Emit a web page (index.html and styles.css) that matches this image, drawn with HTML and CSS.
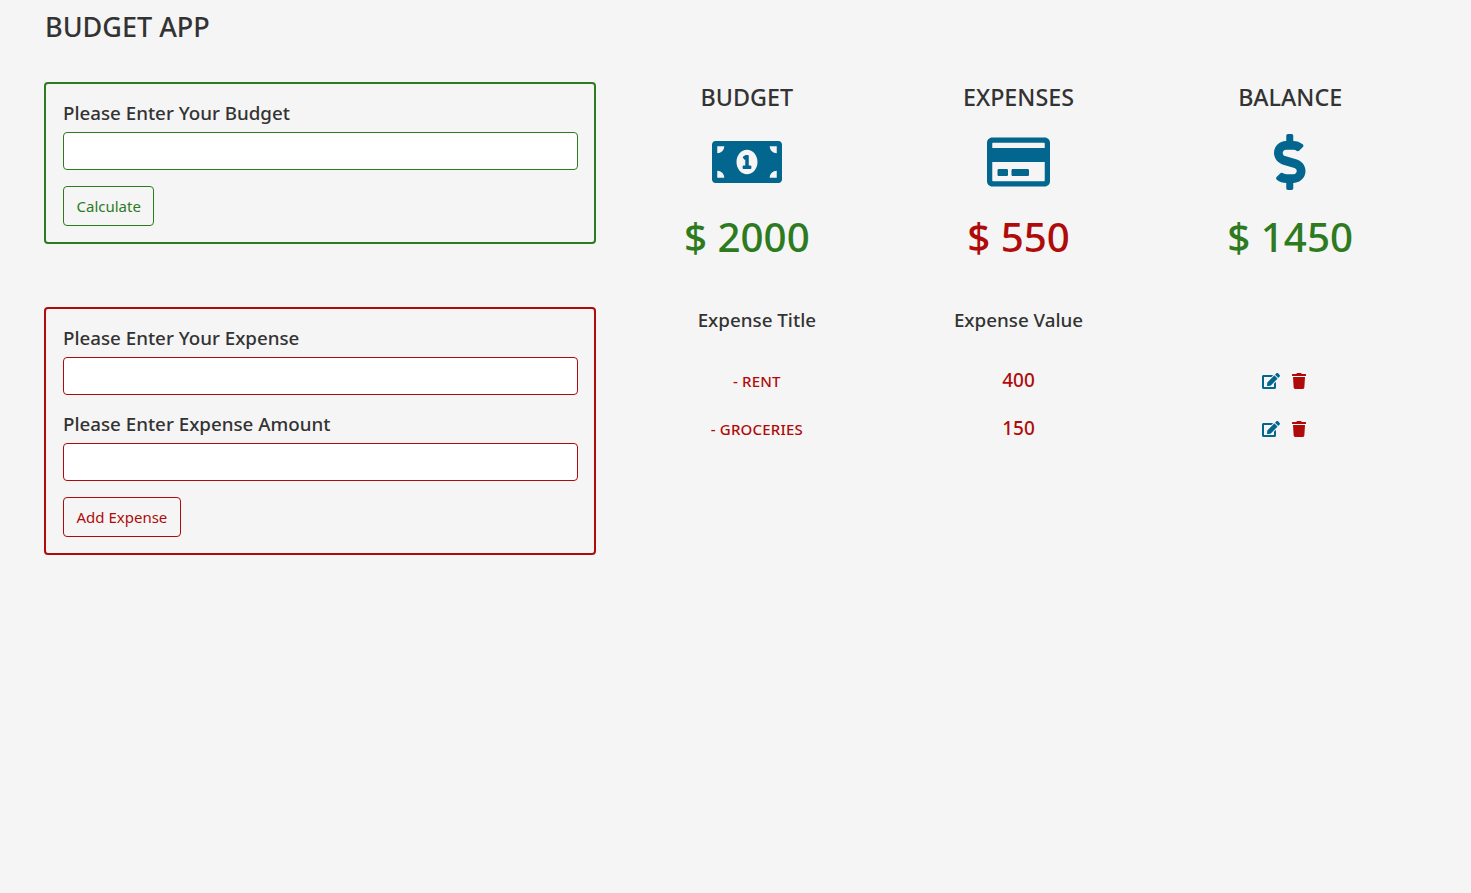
FILE: index.html
```html
<!DOCTYPE html>
<html lang="en">
<head>
<meta charset="utf-8">
<title>Budget App</title>
<link rel="stylesheet" href="styles.css">
</head>
<body>
<div class="page">
  <h1 class="title">BUDGET APP</h1>
  <div class="layout">
    <div class="forms">
      <form class="card card-green">
        <label class="label">Please Enter Your Budget</label>
        <input class="field" type="text">
        <button class="btn btn-green" type="button">Calculate</button>
      </form>
      <form class="card card-red">
        <label class="label">Please Enter Your Expense</label>
        <input class="field field-gap" type="text">
        <label class="label">Please Enter Expense Amount</label>
        <input class="field" type="text">
        <button class="btn btn-red" type="button">Add Expense</button>
      </form>
    </div>
    <div class="results">
      <div class="stats">
        <div class="stat">
          <h2 class="stat-name">BUDGET</h2>
          <svg class="stat-icon" viewBox="0 0 640 512"><path d="M352 288h-16v-88c0-4.42-3.58-8-8-8h-13.58c-4.74 0-9.37 1.4-13.31 4.03l-15.33 10.22a7.994 7.994 0 0 0-2.22 11.09l8.88 13.31a7.994 7.994 0 0 0 11.09 2.22l.47-.31V288h-16c-4.42 0-8 3.58-8 8v16c0 4.42 3.58 8 8 8h64c4.42 0 8-3.58 8-8v-16c0-4.42-3.58-8-8-8zM608 64H32C14.33 64 0 78.33 0 96v320c0 17.67 14.33 32 32 32h576c17.67 0 32-14.33 32-32V96c0-17.67-14.33-32-32-32zM48 400v-64c35.35 0 64 28.65 64 64H48zm0-224v-64h64c0 35.35-28.65 64-64 64zm272 192c-53 0-96-50.15-96-112 0-61.86 43-112 96-112s96 50.14 96 112c0 61.87-43.02 112-96 112zm272 32h-64c0-35.35 28.65-64 64-64v64zm0-224c-35.35 0-64-28.65-64-64h64v64z"/></svg>
          <div class="amount green">$ 2000</div>
        </div>
        <div class="stat">
          <h2 class="stat-name">EXPENSES</h2>
          <svg class="stat-icon" viewBox="0 0 576 512"><path d="M527.9 32H48.1C21.5 32 0 53.5 0 80v352c0 26.5 21.5 48 48.1 48h479.8c26.6 0 48.1-21.5 48.1-48V80c0-26.5-21.5-48-48.1-48zM54.1 80h467.8c3.3 0 6 2.7 6 6v42H48.1V86c0-3.3 2.7-6 6-6zm467.8 352H54.1c-3.3 0-6-2.7-6-6V256h479.8v170c0 3.3-2.7 6-6 6zM192 332v40c0 6.6-5.4 12-12 12h-72c-6.6 0-12-5.4-12-12v-40c0-6.6 5.4-12 12-12h72c6.6 0 12 5.4 12 12zm192 0v40c0 6.6-5.4 12-12 12H236c-6.6 0-12-5.4-12-12v-40c0-6.6 5.4-12 12-12h136c6.6 0 12 5.4 12 12z"/></svg>
          <div class="amount red">$ 550</div>
        </div>
        <div class="stat">
          <h2 class="stat-name">BALANCE</h2>
          <svg class="stat-icon" viewBox="0 0 288 512"><path d="M209.2 233.4l-108-31.6C88.7 198.2 80 186.5 80 173.5c0-16.3 13.2-29.5 29.5-29.5h66.3c12.2 0 24.2 3.7 34.2 10.5 6.1 4.1 14.3 3.1 19.5-2l34.8-34c7.1-6.9 6.1-18.4-1.8-24.5C238 74.8 207.4 64.1 176 64V16c0-8.8-7.2-16-16-16h-32c-8.8 0-16 7.2-16 16v48h-2.5C45.8 64-5.4 118.7.5 183.6c4.2 46.1 39.4 83.6 83.8 96.6l102.5 30c12.5 3.7 21.2 15.3 21.2 28.3 0 16.3-13.2 29.5-29.5 29.5h-66.3C100 368 88 364.3 78 357.5c-6.1-4.1-14.3-3.1-19.5 2l-34.8 34c-7.1 6.9-6.1 18.4 1.8 24.5 24.5 19.2 55.1 29.9 86.5 30v48c0 8.8 7.2 16 16 16h32c8.8 0 16-7.2 16-16v-48.2c46.6-.9 90.3-28.6 105.7-72.7 21.5-61.6-14.6-124.8-72.5-141.7z"/></svg>
          <div class="amount green">$ 1450</div>
        </div>
      </div>
      <div class="list">
        <div class="list-head">
          <div class="head-title">Expense Title</div>
          <div class="head-value">Expense Value</div>
          <div></div>
        </div>
        <div class="list-row">
          <div class="item-name">- RENT</div>
          <div class="item-value">400</div>
          <div class="item-actions">
            <svg class="act act-edit" viewBox="0 0 576 512"><path d="M402.6 83.2l90.2 90.2c3.8 3.8 3.8 10 0 13.8L274.4 405.6l-92.8 10.3c-12.4 1.4-22.9-9.1-21.5-21.5l10.3-92.8L388.8 83.2c3.8-3.8 10-3.8 13.8 0zm162-22.9l-48.8-48.8c-15.2-15.2-39.9-15.2-55.2 0l-35.4 35.4c-3.8 3.8-3.8 10 0 13.8l90.2 90.2c3.8 3.8 10 3.8 13.8 0l35.4-35.4c15.2-15.3 15.2-40 0-55.2zM384 346.2V448H64V128h229.8c3.2 0 6.2-1.3 8.5-3.5l40-40c7.6-7.6 2.2-20.5-8.5-20.5H48C21.5 64 0 85.5 0 112v352c0 26.5 21.5 48 48 48h352c26.5 0 48-21.5 48-48V306.2c0-10.7-12.9-16-20.5-8.5l-40 40c-2.2 2.3-3.5 5.3-3.5 8.5z"/></svg>
            <svg class="act act-trash" viewBox="0 0 448 512"><path d="M432 32H312l-9.4-18.7A24 24 0 0 0 281.1 0H166.8a23.72 23.72 0 0 0-21.4 13.3L136 32H16A16 16 0 0 0 0 48v32a16 16 0 0 0 16 16h416a16 16 0 0 0 16-16V48a16 16 0 0 0-16-16zM53.2 467a48 48 0 0 0 47.9 45h245.8a48 48 0 0 0 47.9-45L416 128H32z"/></svg>
          </div>
        </div>
        <div class="list-row">
          <div class="item-name">- GROCERIES</div>
          <div class="item-value">150</div>
          <div class="item-actions">
            <svg class="act act-edit" viewBox="0 0 576 512"><path d="M402.6 83.2l90.2 90.2c3.8 3.8 3.8 10 0 13.8L274.4 405.6l-92.8 10.3c-12.4 1.4-22.9-9.1-21.5-21.5l10.3-92.8L388.8 83.2c3.8-3.8 10-3.8 13.8 0zm162-22.9l-48.8-48.8c-15.2-15.2-39.9-15.2-55.2 0l-35.4 35.4c-3.8 3.8-3.8 10 0 13.8l90.2 90.2c3.8 3.8 10 3.8 13.8 0l35.4-35.4c15.2-15.3 15.2-40 0-55.2zM384 346.2V448H64V128h229.8c3.2 0 6.2-1.3 8.5-3.5l40-40c7.6-7.6 2.2-20.5-8.5-20.5H48C21.5 64 0 85.5 0 112v352c0 26.5 21.5 48 48 48h352c26.5 0 48-21.5 48-48V306.2c0-10.7-12.9-16-20.5-8.5l-40 40c-2.2 2.3-3.5 5.3-3.5 8.5z"/></svg>
            <svg class="act act-trash" viewBox="0 0 448 512"><path d="M432 32H312l-9.4-18.7A24 24 0 0 0 281.1 0H166.8a23.72 23.72 0 0 0-21.4 13.3L136 32H16A16 16 0 0 0 0 48v32a16 16 0 0 0 16 16h416a16 16 0 0 0 16-16V48a16 16 0 0 0-16-16zM53.2 467a48 48 0 0 0 47.9 45h245.8a48 48 0 0 0 47.9-45L416 128H32z"/></svg>
          </div>
        </div>
      </div>
    </div>
  </div>
</div>
</body>
</html>
```

FILE: styles.css
```css
* { box-sizing: border-box; }
html, body { margin: 0; height: 100%; }
body {
  background: #f5f5f5;
  color: #333;
  font-family: "Noto Sans", "Open Sans", sans-serif;
  font-size: 16px;
  overflow: hidden;
}
.page { padding: 8px 45px 0 44px; }
.title {
  margin: 0;
  font-size: 27px;
  font-weight: 500;
  line-height: 38px;
  height: 74px;
  padding-left: 1px;
}
.layout {
  display: grid;
  grid-template-columns: 552px 815px;
  column-gap: 15px;
}
.forms { display: flex; flex-direction: column; gap: 63px; }
.card {
  display: flex;
  flex-direction: column;
  align-items: flex-start;
  border: 2px solid;
  border-radius: 4px;
  padding: 16px 16px 16px 17px;
}
.card-green { border-color: #2d7a1f; }
.card-red { border-color: #b00b0b; }
.label {
  font-size: 18.75px;
  font-weight: 500;
  line-height: 27px;
  margin: -1px 0 6px;
}
.field {
  display: block;
  width: 100%;
  height: 38px;
  background: #fff;
  border: 1px solid;
  border-radius: 4px;
  padding: 6px 12px;
  font: inherit;
}
.card-green .field { border-color: #2d7a1f; }
.card-red .field { border-color: #b00b0b; }
.field-gap { margin-bottom: 16px; }
.btn {
  margin-top: 16px;
  height: 40px;
  padding: 0 12.5px;
  background: transparent;
  border: 1px solid;
  border-radius: 4px;
  font: inherit;
  font-size: 15px;
}
.btn-green { color: #2d7a1f; border-color: #2d7a1f; }
.btn-red { color: #b00b0b; border-color: #b00b0b; }
.stats { display: grid; grid-template-columns: repeat(3, 1fr); }
.stat { display: flex; flex-direction: column; align-items: center; }
.stat-name {
  margin: -1px 0 0;
  font-size: 23.3px;
  font-weight: 500;
  line-height: 32px;
}
.stat-icon { display: block; height: 56px; fill: #02668f; margin-top: 21px; }
.amount { font-size: 40.3px; font-weight: 500; line-height: 60px; margin-top: 17px; }
.green { color: #2d7a1f; }
.red { color: #b00b0b; }
.list { margin-top: 33px; }
.list-head, .list-row { display: grid; grid-template-columns: repeat(3, 1fr); align-items: center; text-align: center; }
.list-head { font-size: 18.8px; font-weight: 500; line-height: 28px; height: 40px; margin-bottom: 17px; }
.head-title { padding-left: 20px; }
.list-row { height: 48px; color: #b00b0b; }
.item-name { font-size: 15px; letter-spacing: 0.2px; font-weight: 500; padding-left: 20px; }
.item-value { font-size: 19px; font-weight: 500; margin-top: -2px; }
.item-actions { display: flex; justify-content: center; align-items: center; gap: 12px; padding-right: 13px; }
.act { display: block; height: 16px; }
.act-edit { fill: #02668f; }
.act-trash { fill: #b00b0b; }
```
